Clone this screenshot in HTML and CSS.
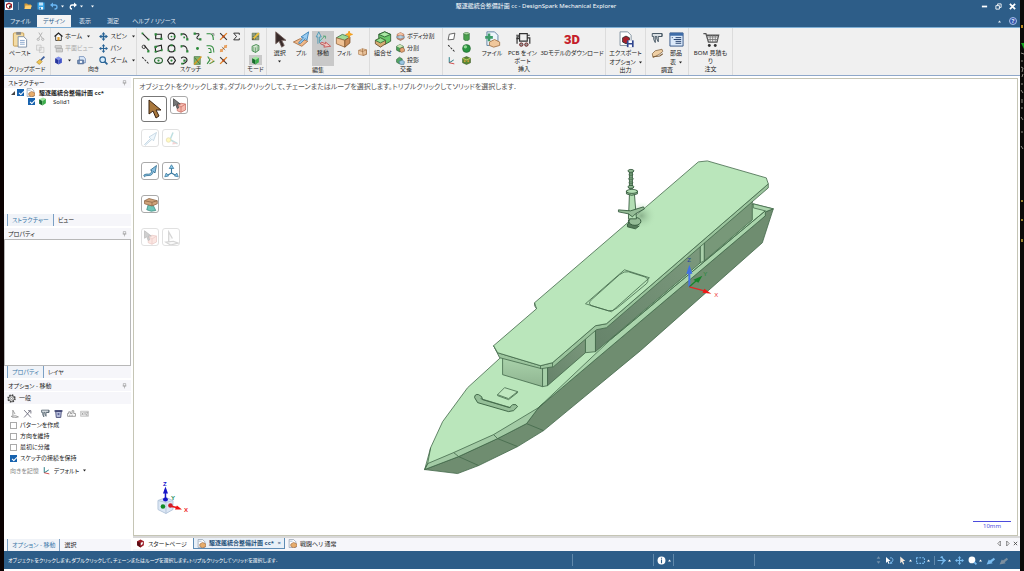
FILE: index.html
```html
<!DOCTYPE html>
<html lang="ja">
<head>
<meta charset="utf-8">
<title>駆逐艦統合整備計画 cc - DesignSpark Mechanical Explorer</title>
<link rel="stylesheet" href="styles.css">
</head>
<body>
<svg class="defs" aria-hidden="true">
  <symbol id="logo" viewBox="0 0 16 16"><rect width="16" height="16" rx="1" fill="#fff"/><path d="M8 1l6 3v7l-6 4-6-4V4z" fill="#a3202a"/><path d="M8 4l4 2v4l-4 3-4-3V6z" fill="#fff"/><path d="M8 8l4-2v4l-4 3z" fill="#333"/></symbol>
  <symbol id="cubered" viewBox="0 0 16 16"><path d="M8 1l6 3v7l-6 4-6-4V4z" fill="#9e1c26"/><path d="M8 7l4-2v4l-4 3z" fill="#fff"/><path d="M2 4l6 3v8l-6-4z" fill="#5b0d14"/></symbol>
  <symbol id="folder" viewBox="0 0 16 16"><path d="M1 3h5l2 2h6v9H1z" fill="#d49a38"/><path d="M3 7h13l-3 7H1z" fill="#ffcf70"/></symbol>
  <symbol id="save" viewBox="0 0 16 16"><path d="M1 1h14v14H1z" fill="#36a4e6"/><path d="M4 1h8v6H4z" fill="#bfe2fa"/><path d="M4 10h8v5H4z" fill="#e9f5fd"/><path d="M5 11h3v4H5z" fill="#2178b8"/></symbol>
  <symbol id="undo" viewBox="0 0 16 16"><path d="M3 6h7a4 4 0 0 1 0 8H9" fill="none" stroke="#69b5f2" stroke-width="2.6"/><path d="M6 1L0 6l6 5z" fill="#69b5f2"/></symbol>
  <symbol id="redo" viewBox="0 0 16 16"><path d="M12 6H7a4 4 0 0 0-1 8" fill="none" stroke="#fff" stroke-width="2.6"/><path d="M10 1l6 5-6 5z" fill="#fff"/></symbol>
  <symbol id="caret" viewBox="0 0 6 6"><path d="M0 1h6L3 5z" fill="currentColor"/></symbol>
  <symbol id="caretup" viewBox="0 0 6 6"><path d="M0 5h6L3 1z" fill="currentColor"/></symbol>
  <symbol id="paste" viewBox="0 0 16 18"><rect x="1" y="2" width="11" height="14" rx="1" fill="#f3dba4" stroke="#c79c4f"/><path d="M4 1h5v3H4z" fill="#888"/><path d="M6 6h6l3 3v8H6z" fill="#fff" stroke="#7c8fa8"/><path d="M8 10h5M8 12h5M8 14h5" stroke="#8aa7cc"/></symbol>
  <symbol id="cut" viewBox="0 0 16 16"><path d="M5 1l6 10M11 1L5 11" stroke="#aaa" stroke-width="1.5"/><circle cx="4" cy="13" r="2" fill="none" stroke="#aaa" stroke-width="1.5"/><circle cx="12" cy="13" r="2" fill="none" stroke="#aaa" stroke-width="1.5"/></symbol>
  <symbol id="copy" viewBox="0 0 16 16"><path d="M1 2h8v9H1zM6 6h8v9H6z" fill="#eee" stroke="#b5b5b5"/></symbol>
  <symbol id="brush" viewBox="0 0 16 16"><path d="M15 1l-7 7" stroke="#3a5d9c" stroke-width="3"/><path d="M7 6l4 4-5 5-5-4z" fill="#f0c552" stroke="#a67b1c"/></symbol>
  <symbol id="home" viewBox="0 0 16 16"><path d="M3 7v8h10V7" fill="#fff" stroke="#333" stroke-width="1.6"/><path d="M1 8l7-6 7 6" fill="none" stroke="#222" stroke-width="2.2"/><path d="M6 9h4v6H6z" fill="#e0a030"/></symbol>
  <symbol id="plan" viewBox="0 0 16 16"><path d="M2 3h11v4H2zM4 8h11v6H4z" fill="#ddd" stroke="#aaa" stroke-width="1.5"/><path d="M6 11h7" stroke="#aaa"/></symbol>
  <symbol id="cubeblue" viewBox="0 0 16 16"><path d="M2 4l6-3 6 3-6 3z" fill="#8090e8"/><path d="M2 4l6 3v8l-6-3z" fill="#26349c"/><path d="M14 4L8 7v8l6-3z" fill="#4355c8"/></symbol>
  <symbol id="snap" viewBox="0 0 16 16"><path d="M4 1h8l3 4v7H5z" fill="#dbe8f8" stroke="#4669a0"/><rect x="1" y="7" width="11" height="7" rx="1" fill="#7690b8" stroke="#39557f"/><circle cx="7" cy="10.500" r="2" fill="#fff"/></symbol>
  <symbol id="spin" viewBox="0 0 16 16"><path d="M8 2v12M2 8h12" stroke="#286396" stroke-width="2"/><path d="M8 0l3 4H5zM8 16l3-4H5zM0 8l4-3v6zM16 8l-4-3v6z" fill="#286396"/><ellipse cx="8" cy="8" rx="5" ry="3" fill="none" stroke="#286396"/></symbol>
  <symbol id="pan" viewBox="0 0 16 16"><path d="M8 2v12M2 8h12" stroke="currentColor" stroke-width="2"/><path d="M8 0l3 4H5zM8 16l3-4H5zM0 8l4-3v6zM16 8l-4-3v6z" fill="currentColor"/></symbol>
  <symbol id="zoomi" viewBox="0 0 16 16"><circle cx="6.500" cy="6.500" r="5" fill="#d8ecfb" stroke="#2a6496" stroke-width="2"/><path d="M10 10l5 5" stroke="#2a6496" stroke-width="3"/></symbol>
  <symbol id="line" viewBox="0 0 16 16"><path d="M3 3l10 10" stroke="#222" stroke-width="2"/><path d="M1 1h3v3H1zM12 12h3v3h-3z" fill="#2d8a3b"/></symbol>
  <symbol id="rect" viewBox="0 0 16 16"><path d="M3 4h10v8H3z" fill="none" stroke="#222" stroke-width="2"/><path d="M1 2h4v4H1zM11 10h4v4h-4z" fill="#2d8a3b"/></symbol>
  <symbol id="circ" viewBox="0 0 16 16"><circle cx="8" cy="8" r="6" fill="none" stroke="#222" stroke-width="1.800"/><circle cx="8" cy="8" r="1.500" fill="#2d8a3b"/><path d="M12 6h3v4h-3z" fill="#2d8a3b"/></symbol>
  <symbol id="arc" viewBox="0 0 16 16"><path d="M2 4c6-2 11 1 11 9" fill="none" stroke="#222" stroke-width="2"/><path d="M1 2h3v4H1zM11 11h4v4h-4z" fill="#2d8a3b"/></symbol>
  <symbol id="tarc" viewBox="0 0 16 16"><path d="M2 4c6-2 11 1 11 9" fill="none" stroke="#222" stroke-width="2"/><path d="M1 2h3v4H1zM11 11h4v4h-4zM6 8h3v3H6z" fill="#2d8a3b"/></symbol>
  <symbol id="spline" viewBox="0 0 16 16"><path d="M2 3h8c3 3-5 5-3 8 1 2 4 2 7 2" fill="none" stroke="#222" stroke-width="1.800"/><path d="M1 1h4v4H1zM11 11h4v4h-4z" fill="#2d8a3b"/></symbol>
  <symbol id="corner" viewBox="0 0 16 16"><path d="M1 3h6c4 0 6 2 6 11" fill="none" stroke="#2d8a3b" stroke-width="2"/><path d="M10 3h4v4" fill="none" stroke="#444"/></symbol>
  <symbol id="trim" viewBox="0 0 16 16"><path d="M2 2l12 12" stroke="#333" stroke-width="2"/><path d="M14 2L2 14" stroke="#e08024" stroke-width="2.500"/><path d="M6 6h4v4H6z" fill="#b3471c"/></symbol>
  <symbol id="sigma" viewBox="0 0 16 16"><path d="M13 5V2H3l5 6-5 6h10v-3" fill="none" stroke="#222" stroke-width="1.600"/></symbol>
  <symbol id="tangent" viewBox="0 0 16 16"><circle cx="5" cy="5" r="3" fill="none" stroke="#333" stroke-width="1.600"/><path d="M6 3l8 9" stroke="#222" stroke-width="2"/><path d="M11 11h4v4h-4z" fill="#2d8a3b"/></symbol>
  <symbol id="rect3" viewBox="0 0 16 16"><path d="M2 5l11-3 1 9-11 3z" fill="none" stroke="#222" stroke-width="2"/><path d="M1 3h4v4H1zM1 12h4v3H1zM12 9h3v4h-3z" fill="#2d8a3b"/></symbol>
  <symbol id="circ3" viewBox="0 0 16 16"><circle cx="8" cy="8" r="6" fill="none" stroke="#222" stroke-width="2"/><path d="M6 1h4v3H6zM1 10h3v3H1zM12 10h3v3h-3z" fill="#2d8a3b"/></symbol>
  <symbol id="point" viewBox="0 0 16 16"><circle cx="8" cy="8" r="2.600" fill="#2d8a3b"/></symbol>
  <symbol id="offset" viewBox="0 0 16 16"><path d="M1 3h6c5 0 7 3 7 12M4 8h2c2 0 3 2 3 7H5" fill="none" stroke="#2d8a3b" stroke-width="1.800"/></symbol>
  <symbol id="split" viewBox="0 0 16 16"><path d="M14 2L2 14" stroke="#e08024" stroke-width="2"/><path d="M9 2h5v5H9zM2 9h5v5H2z" fill="#e9a263"/><path d="M5 5l6 6" stroke="#555"/></symbol>
  <symbol id="cline" viewBox="0 0 16 16"><path d="M2 2l12 12" stroke="#333" stroke-width="1.800" stroke-dasharray="4 2"/></symbol>
  <symbol id="ell" viewBox="0 0 16 16"><ellipse cx="8" cy="8" rx="7" ry="5" fill="none" stroke="#245f2d" stroke-width="2"/><circle cx="8" cy="8" r="2" fill="#2d8a3b"/></symbol>
  <symbol id="poly" viewBox="0 0 16 16"><path d="M5 2h6l4 6-4 6H5L1 8z" fill="none" stroke="#222" stroke-width="2"/><circle cx="8" cy="8" r="2" fill="#2d8a3b"/></symbol>
  <symbol id="sweep" viewBox="0 0 16 16"><path d="M2 4c5-5 12 0 10 5-1 3-4 4-7 5" fill="none" stroke="#222" stroke-width="2"/><path d="M6 6h4v4H6zM2 12h4v3H2z" fill="#2d8a3b"/></symbol>
  <symbol id="proj" viewBox="0 0 16 16"><path d="M2 1h11v14H2z" fill="#7fb46b" stroke="#386a35"/><path d="M2 15L15 1" stroke="#d99a24" stroke-width="2.500"/><path d="M3 3l9 11" stroke="#333"/></symbol>
  <symbol id="bend" viewBox="0 0 16 16"><path d="M3 1l4 6-5 7M6 14l9-5" fill="none" stroke="#3b9148" stroke-width="2"/><path d="M6 3l7 5-5 5" fill="none" stroke="#d49a30" stroke-width="1.500"/></symbol>
  <symbol id="cubegreen" viewBox="0 0 16 16"><path d="M2 4l7-3 5 2-6 4z" fill="#a2e7a0"/><path d="M2 4l6 3v8l-6-3z" fill="#176b2b"/><path d="M14 3L8 7v8l6-4z" fill="#3caf4b"/></symbol>
  <symbol id="pattern" viewBox="0 0 16 16"><path d="M1 4l7-3 7 3v8l-7 3-7-3z" fill="#5d8a35" stroke="#38541f"/><path d="M1 4l7 3 7-3" fill="none" stroke="#b7c85a" stroke-width="2"/><circle cx="5" cy="9" r="1.500" fill="#e8a33a"/><circle cx="11" cy="9" r="1.500" fill="#e8a33a"/></symbol>
  <symbol id="section" viewBox="0 0 16 16"><path d="M2 4l7-3 5 2v8l-6 4-6-3z" fill="#dcebd9" stroke="#2e7c3a" stroke-width="1.500"/><path d="M8 6v9M5 5v8M11 4v8" stroke="#2e7c3a"/></symbol>
  <symbol id="sketchmode" viewBox="0 0 16 16"><path d="M2 2h12v12H2z" fill="#8c9a80" stroke="#57704e"/><path d="M2 8h12M8 2v12" stroke="#54714b"/><path d="M3 13L14 2" stroke="#f1c136" stroke-width="3"/><path d="M2 14l4-1-3-3z" fill="#333"/></symbol>
  <symbol id="cursor" viewBox="0 0 16 20"><path d="M3 1v14l4-3 3 7 3-2-3-6h5z" fill="#382a29" stroke="#735e5a"/></symbol>
  <symbol id="cursorgold" viewBox="0 0 16 20"><path d="M3 1v14l4-3 3 7 3-2-3-6h5z" fill="#a9783d" stroke="#3b2413"/></symbol>
  <symbol id="pull" viewBox="0 0 20 20"><path d="M1 13l8-4 9 3-7 6z" fill="#f0b889" stroke="#a56e42"/><path d="M7 14l6-6-3-1 9-6-2 10-2-2-6 6z" fill="#9bcdf2" stroke="#377eb4"/></symbol>
  <symbol id="move" viewBox="0 0 20 20"><path d="M5 1l3 6H6v7l5 3M5 1L2 7h2v8" fill="#a6d7ec" stroke="#4b94ae"/><path d="M6 12l6-6M10 6h3v3" fill="none" stroke="#49a36f"/><path d="M8 13l5 2v-2l6 5-8 1 1-2-5-2z" fill="#f0c4c0" stroke="#c45050"/></symbol>
  <symbol id="fill" viewBox="0 0 20 20"><path d="M1 8l7-4 9 3-6 4z" fill="#9edb96" stroke="#44704a"/><path d="M1 8l10 3v8L1 15z" fill="#efc295" stroke="#956a43"/><path d="M17 7l-6 4v8l6-5z" fill="#c98d5a" stroke="#83552c"/><path d="M16 0l1 3 3 1-3 1-1 3-1-3-3-1 3-1z" fill="#ffb420" stroke="#ef9615"/></symbol>
  <symbol id="cubetan" viewBox="0 0 16 16"><path d="M1 6l7-3 7 2v8l-6 2-8-2z" fill="#f1cda7" stroke="#a36c3d"/><path d="M8 8l7-3v8l-6 2zM8 3v5L1 6" fill="#e6bf98" stroke="#915c31"/></symbol>
  <symbol id="combine" viewBox="0 0 20 20"><path d="M5 4l7-3 7 3v8l-7 4-7-4z" fill="#69c86a" stroke="#285a2d"/><path d="M5 4l7 3 7-3-7-3z" fill="#a9e8a4" stroke="#285a2d"/><path d="M1 11l6-3 6 3v4l-6 4-6-4z" fill="#d7ac74" stroke="#664b2e"/><path d="M1 11l6-3 6 3-6 3z" fill="#95df8e" stroke="#316a35"/></symbol>
  <symbol id="splitbody" viewBox="0 0 16 16"><path d="M2 4l6-3 6 3v8l-6 3-6-3z" fill="#d58a68" stroke="#8a5a42"/><path d="M2 4l6-3 6 3-6 3z" fill="#f3bf9e"/><path d="M0 9l8-3 8 3-8 3z" fill="#b4cfe0" stroke="#7596ac"/></symbol>
  <symbol id="splitgreen" viewBox="0 0 16 16"><path d="M1 4l6-3 6 3v7l-6 3-6-3z" fill="#49a057" stroke="#27532d"/><path d="M1 4l6-3 6 3-6 3z" fill="#cfe6b8"/><path d="M7 8l5-2 3 3v4l-5 2-3-2z" fill="#e4a272" stroke="#775136"/></symbol>
  <symbol id="projgreen" viewBox="0 0 16 16"><path d="M1 6l5-4 5 3v6l-5 3-5-3z" fill="#54a866" stroke="#2b5a36"/><path d="M5 10l6-3 4 3-1 5H8z" fill="#9cc6e2" stroke="#44718f"/></symbol>
  <symbol id="plane" viewBox="0 0 16 16"><path d="M4 4l10-2-2 11-10 1z" fill="#fff" stroke="#333" stroke-width="1.300"/></symbol>
  <symbol id="cyl" viewBox="0 0 16 16"><path d="M3 3v10c0 3 10 3 10 0V3z" fill="#49a04d" stroke="#24632c"/><ellipse cx="8" cy="3" rx="5" ry="2" fill="#b3e0a8" stroke="#24632c"/></symbol>
  <symbol id="sphere" viewBox="0 0 16 16"><circle cx="8" cy="8" r="7" fill="#299440" stroke="#23612e"/><circle cx="6" cy="5" r="3" fill="#93d895"/></symbol>
  <symbol id="axes" viewBox="0 0 16 16"><path d="M4 2v10l8-5" fill="none" stroke="#237a82" stroke-width="1.700"/><path d="M4 12l9 2" stroke="#c33" stroke-width="1.500"/></symbol>
  <symbol id="doc" viewBox="0 0 16 16"><path d="M2 1h8l4 4v10H2z" fill="#fff" stroke="#6c7f96"/><path d="M5 9l5-3 6 3v4l-6 3-5-3z" fill="#e6ac6c" stroke="#946039"/><path d="M3 4h5" stroke="#759bbf"/></symbol>
  <symbol id="file" viewBox="0 0 20 20"><path d="M4 1h9l4 4v12H4z" fill="#eef5fb" stroke="#54799a"/><path d="M2 6h3V3h3v3h3v3H8v3H5V9H2z" fill="#3d9b69"/><path d="M7 13l6-3 6 3v4l-7 2-5-2z" fill="#f0c79b" stroke="#a27249"/></symbol>
  <symbol id="pcb" viewBox="0 0 20 20"><path d="M6 3h9v9H6zM2 5h4M2 9h4M15 5h3M6 7H3v8M15 8h3v7" fill="none" stroke="#333" stroke-width="1.400"/><circle cx="8" cy="16" r="2" fill="#999" stroke="#611"/><circle cx="14" cy="16" r="2" fill="#999" stroke="#611"/></symbol>
  <symbol id="export" viewBox="0 0 20 20"><path d="M3 1h9l4 4v12H3z" fill="#fff" stroke="#718494"/><path d="M6 8l4-2 4 2v5l-4 2-4-2z" fill="#a9202b" stroke="#333"/><path d="M11 11h8v8h-8z" fill="#31468e"/><path d="M13 11h4v3h-4zM13 16h4v3h-4z" fill="#fff"/></symbol>
  <symbol id="caliper" viewBox="0 0 16 16"><path d="M1 2h13v4H9v7L7 9V6H5v8L3 10V6H1zM10 6h4V2" fill="#d9dfe3" stroke="#465663" stroke-width="1.300"/></symbol>
  <symbol id="mass" viewBox="0 0 16 16"><path d="M1 9l4-4 9-2 1 3-5 4-8 4z" fill="#efcfa4" stroke="#80613d"/><path d="M2 13l9-1 4-3" fill="none" stroke="#80613d" stroke-width="1.500"/></symbol>
  <symbol id="bom" viewBox="0 0 16 16"><path d="M1 1h14v14H1z" fill="#dbe9fa" stroke="#315485"/><path d="M1 1h14v3H1z" fill="#3e6ca8"/><path d="M7 6h6M5 8h8M7 10h6M7 12h6M3 6h1" stroke="#203c69"/></symbol>
  <symbol id="cart" viewBox="0 0 20 20"><path d="M1 3h3l3 10h10l2-8H5" fill="none" stroke="#555" stroke-width="1.500"/><path d="M5 7h13M6 10h12M9 5v8M12 5v8M15 5v8" stroke="#777"/><circle cx="8" cy="17" r="1.700" fill="#333"/><circle cx="15" cy="17" r="1.700" fill="#333"/></symbol>
  <symbol id="selbox" viewBox="0 0 20 20"><path d="M7 9l5-2 6 1v8l-6 3-5-2z" fill="#f6b9ae" stroke="#c76d63"/><path d="M12 12l6-4M12 12v7M12 12L7 9" stroke="#c76d63"/><path d="M2 1v10l3-2 2 5 2-1-2-5h4z" fill="#777" stroke="#444"/></symbol>
  <symbol id="dirarrow" viewBox="0 0 20 20"><path d="M2 18l8-8-2-2 10-6-4 11-2-2-9 8z" fill="#d4e9f8" stroke="#3d7ca5"/></symbol>
  <symbol id="patharrow" viewBox="0 0 20 20"><path d="M1 15c5-4 8 2 11-6l-2-1 8-6-2 10-2-2c-3 9-8 3-12 7z" fill="#8bc1e3" stroke="#246487"/></symbol>
  <symbol id="anchor" viewBox="0 0 20 20"><path d="M8 12l4-10M9 12l9 5" stroke="#48a6aa" stroke-width="2"/><circle cx="6" cy="12" r="3" fill="#ffef4c" stroke="#bba326"/><path d="M12 14l6 3-7 1z" fill="#d88"/></symbol>
  <symbol id="triad" viewBox="0 0 20 20"><path d="M10 12V4M10 12l-7 4M10 12l7 4" stroke="#39799f" stroke-width="1.500"/><path d="M10 1l3 5H7zM1 17l2-5 3 4zM19 17l-5-1 3-4z" fill="#8dc8e8" stroke="#39799f"/></symbol>
  <symbol id="support" viewBox="0 0 20 20"><path d="M7 10h6l4 8-6 1-6-2z" fill="#6fc5b8" stroke="#39877d"/><path d="M2 5l6-3 11 3v4l-7 3L2 9z" fill="#d0a37a" stroke="#8a6343"/><path d="M2 5l10 2 7-2M12 7v5" fill="none" stroke="#8a6343"/></symbol>
  <symbol id="gear" viewBox="0 0 16 16"><circle cx="8" cy="8" r="6" fill="#fff" stroke="#444" stroke-width="3" stroke-dasharray="2.700 2"/><circle cx="8" cy="8" r="5" fill="none" stroke="#444" stroke-width="1.500"/><circle cx="8" cy="8" r="2" fill="#fff" stroke="#444"/></symbol>
  <symbol id="pin" viewBox="0 0 8 10"><path d="M2 1h4v4H2zM1 5h6M4 5v4" fill="none" stroke="#999"/></symbol>
  <symbol id="ruler" viewBox="0 0 16 16"><path d="M1 13h14V8h-3V3H9v5H6V5H3v3H1zM5 13v-3M9 13v-3" fill="none" stroke="#888" stroke-width="1.400"/></symbol>
  <symbol id="xyz" viewBox="0 0 16 16"><path d="M1 4h14v9H1z" fill="#eee" stroke="#aaa"/><path d="M3 6l3 5M6 6l-3 5M8 6l1 2 1-2M9 8v3M11 6h3l-3 5h3" fill="none" stroke="#888"/></symbol>
  <symbol id="upto" viewBox="0 0 16 16"><path d="M2 13l8-1 5 2-8 2zM5 12V2l4 7" fill="#eee" stroke="#888" stroke-width="1.300"/></symbol>
  <symbol id="crossarrow" viewBox="0 0 16 16"><path d="M2 15L13 3M9 3h5v5M2 2l12 13" fill="none" stroke="#667" stroke-width="1.500"/></symbol>
  <symbol id="trash" viewBox="0 0 16 16"><path d="M3 4h10l-1 11H4z" fill="#bbc2df" stroke="#3c4270" stroke-width="1.500"/><path d="M1 2h14v3H1z" fill="#3c4270"/><circle cx="8" cy="9" r="2" fill="#60669a"/></symbol>
  <symbol id="tree" viewBox="0 0 6 6"><path d="M6 0v6H0z" fill="#444"/></symbol>
  <symbol id="info" viewBox="0 0 16 16"><circle cx="8" cy="8" r="7" fill="#fff"/><path d="M7 3h2v2H7zM7 6h2v7H7z" fill="#2c5b86"/></symbol>
  <symbol id="selrot" viewBox="0 0 18 16"><path d="M2 1v12l3-3 2 5 2-1-2-5h4z" fill="#fff"/><path d="M10 3c6-2 8 5 3 9" fill="none" stroke="#7ab9ec" stroke-width="2"/><path d="M12 9l3 5-6 1z" fill="#7ab9ec"/></symbol>
  <symbol id="whitecursor" viewBox="0 0 16 16"><path d="M4 1v12l3-3 2 5 2-1-2-5h4z" fill="#f4e8dc"/></symbol>
  <symbol id="marquee" viewBox="0 0 16 16"><path d="M1 3h14v10H1z" fill="none" stroke="#79bbef" stroke-width="2" stroke-dasharray="3 2"/></symbol>
  <symbol id="orbit" viewBox="0 0 16 16"><path d="M1 8h14M8 1c5 5 5 9 0 14" fill="none" stroke="#79bbef" stroke-width="2"/><path d="M11 4l5 4-5 4zM5 2l5-2v5z" fill="#79bbef"/></symbol>
  <symbol id="whitezoom" viewBox="0 0 16 16"><circle cx="7" cy="7" r="6" fill="#fff"/><path d="M11 11l4 4" stroke="#79bbef" stroke-width="3"/></symbol>
  <symbol id="back" viewBox="0 0 16 16"><path d="M14 3l-7 5-2-2-4 9 11-2-2-2 6-5z" fill="currentColor"/></symbol>
</svg>

<div class="app">
  <header class="top">
    <div class="titlebar">
      <div class="quick">
        <svg><use href="#logo"/></svg><i class="bar"></i>
        <button aria-label="開く"><svg><use href="#folder"/></svg></button>
        <button aria-label="保存"><svg><use href="#save"/></svg></button>
        <button aria-label="元に戻す"><svg><use href="#undo"/></svg><svg class="car"><use href="#caret"/></svg></button>
        <button aria-label="やり直し"><svg><use href="#redo"/></svg><svg class="car"><use href="#caret"/></svg></button>
        <button aria-label="カスタマイズ"><svg class="car"><use href="#caret"/></svg></button>
      </div>
      <h1 class="title">駆逐艦統合整備計画 cc - DesignSpark Mechanical Explorer</h1>
      <div class="win">
        <button aria-label="最小化"><svg viewBox="0 0 8 8"><path d="M1 4h6" stroke="#fff" stroke-width="2"/></svg></button>
        <button aria-label="元のサイズ"><svg viewBox="0 0 8 8"><path d="M3 3V1h4v4H5M1 3h4v4H1z" fill="none" stroke="#fff"/></svg></button>
        <button aria-label="閉じる"><svg viewBox="0 0 8 8"><path d="M1 1l6 6M7 1L1 7" stroke="#fff" stroke-width="2"/></svg></button>
      </div>
    </div>
    <nav class="menu">
      <button>ファイル</button><button class="on">デザイン</button><button>表示</button><button>測定</button><button>ヘルプ / リソース</button>
      <div class="help"><button aria-label="折りたたむ"><svg class="car"><use href="#caretup"/></svg></button><button class="q" aria-label="ヘルプ">?</button></div>
    </nav>
  </header>

  <section class="ribbon">
    <div class="group g-clip">
      <div class="row">
        <button class="big"><svg><use href="#paste"/></svg>ペースト</button>
        <div class="col"><button aria-label="切り取り"><svg><use href="#cut"/></svg></button><button aria-label="コピー"><svg><use href="#copy"/></svg></button><button aria-label="書式"><svg><use href="#brush"/></svg></button></div>
      </div><h2>クリップボード</h2>
    </div>
    <div class="group g-view">
      <div class="row">
        <div class="col"><button><svg><use href="#home"/></svg>ホーム<svg class="car"><use href="#caret"/></svg></button><button class="dim" disabled><svg><use href="#plan"/></svg>平面ビュー</button>
          <div class="pair"><button aria-label="ビュー"><svg><use href="#cubeblue"/></svg><svg class="car"><use href="#caret"/></svg></button><button aria-label="スナップ"><svg><use href="#snap"/></svg></button></div></div>
        <div class="col blue"><button><svg><use href="#spin"/></svg>スピン<svg class="car"><use href="#caret"/></svg></button><button><svg><use href="#pan"/></svg>パン</button><button><svg><use href="#zoomi"/></svg>ズーム<svg class="car"><use href="#caret"/></svg></button></div>
      </div><h2>向き</h2>
    </div>
    <div class="group g-sketch">
      <div class="tools">
        <button aria-label="線"><svg><use href="#line"/></svg></button><button aria-label="四角形"><svg><use href="#rect"/></svg></button><button aria-label="円"><svg><use href="#circ"/></svg></button><button aria-label="接線円弧"><svg><use href="#tarc"/></svg></button><button aria-label="スプライン"><svg><use href="#spline"/></svg></button><button aria-label="コーナー"><svg><use href="#corner"/></svg></button><button aria-label="トリム"><svg><use href="#trim"/></svg></button><button aria-label="方程式"><svg><use href="#sigma"/></svg></button>
        <button aria-label="接線"><svg><use href="#tangent"/></svg></button><button aria-label="3点四角形"><svg><use href="#rect3"/></svg></button><button aria-label="3点円"><svg><use href="#circ3"/></svg></button><button aria-label="3点円弧"><svg><use href="#arc"/></svg></button><button aria-label="点"><svg><use href="#point"/></svg></button><button aria-label="オフセット"><svg><use href="#offset"/></svg></button><button aria-label="分割"><svg><use href="#split"/></svg></button><i></i>
        <button aria-label="構築線"><svg><use href="#cline"/></svg></button><button aria-label="楕円"><svg><use href="#ell"/></svg></button><button aria-label="多角形"><svg><use href="#poly"/></svg></button><button aria-label="スイープ円弧"><svg><use href="#sweep"/></svg></button><button aria-label="投影"><svg><use href="#proj"/></svg></button><button aria-label="曲げ"><svg><use href="#bend"/></svg></button><button aria-label="スケール"><svg><use href="#trim"/></svg></button>
      </div><h2>スケッチ</h2>
    </div>
    <div class="group g-mode">
      <div class="col"><button aria-label="スケッチモード"><svg><use href="#sketchmode"/></svg></button><button aria-label="断面モード"><svg><use href="#section"/></svg></button><button class="on" aria-label="3Dモード"><svg><use href="#cubegreen"/></svg></button></div><h2>モード</h2>
    </div>
    <div class="group g-edit">
      <div class="row">
        <button class="big"><svg><use href="#cursor"/></svg>選択<svg class="car"><use href="#caret"/></svg></button><button class="big"><svg><use href="#pull"/></svg>プル</button><button class="big on"><svg><use href="#move"/></svg>移動</button><button class="big"><svg><use href="#fill"/></svg>フィル</button><button class="lone" aria-label="シェル"><svg><use href="#cubetan"/></svg></button>
      </div><h2>編集</h2>
    </div>
    <div class="group g-inter">
      <div class="row"><button class="big"><svg><use href="#combine"/></svg>組合せ</button>
        <div class="col"><button><svg><use href="#splitbody"/></svg>ボディ分割</button><button><svg><use href="#splitgreen"/></svg>分割</button><button><svg><use href="#projgreen"/></svg>投影</button></div></div><h2>交差</h2>
    </div>
    <div class="group g-insert">
      <div class="row">
        <div class="shapes"><button aria-label="平面"><svg><use href="#plane"/></svg></button><button aria-label="円筒"><svg><use href="#cyl"/></svg></button><button aria-label="軸"><svg><use href="#cline"/></svg></button><button aria-label="球"><svg><use href="#sphere"/></svg></button><button aria-label="原点"><svg><use href="#axes"/></svg></button><button aria-label="パターン"><svg><use href="#pattern"/></svg></button></div>
        <button class="big"><svg><use href="#file"/></svg>ファイル</button><button class="big pcb"><svg><use href="#pcb"/></svg>PCB をイン<br>ポート</button><button class="big dl"><b>3D</b>3Dモデルのダウンロード</button>
      </div><h2>挿入</h2>
    </div>
    <div class="group g-out"><div class="row"><button class="big"><svg><use href="#export"/></svg>エクスポート<span>オプション <svg class="car"><use href="#caret"/></svg></span></button></div><h2>出力</h2></div>
    <div class="group g-inv"><div class="row"><div class="col wide"><button aria-label="測定"><svg><use href="#caliper"/></svg></button><button aria-label="質量"><svg><use href="#mass"/></svg></button></div><button class="big"><svg><use href="#bom"/></svg>部品<span>表 <svg class="car"><use href="#caret"/></svg></span></button></div><h2>調査</h2></div>
    <div class="group g-order"><div class="row"><button class="big"><svg><use href="#cart"/></svg>BOM 見積も<br>り</button></div><h2>注文</h2></div>
  </section>

  <main class="work">
    <aside class="side">
      <section class="panel">
        <h3>ストラクチャー<svg><use href="#pin"/></svg></h3>
        <div class="treeview">
          <label class="node"><svg class="tw"><use href="#tree"/></svg><input type="checkbox" checked><svg><use href="#doc"/></svg><strong>駆逐艦統合整備計画 cc*</strong></label>
          <label class="node child"><input type="checkbox" checked><svg><use href="#cubegreen"/></svg><span>Solid1</span></label>
        </div>
        <div class="tabs"><button class="on">ストラクチャー</button><button>ビュー</button></div>
      </section>
      <section class="panel">
        <h3>プロパティ<svg><use href="#pin"/></svg></h3>
        <div class="props"></div>
        <div class="tabs"><button class="on">プロパティ</button><button>レイヤ</button></div>
      </section>
      <section class="panel">
        <h3>オプション - 移動<svg><use href="#pin"/></svg></h3>
        <h4><svg><use href="#gear"/></svg>一般</h4>
        <div class="options">
          <div class="opticons"><button aria-label="指定まで"><svg><use href="#upto"/></svg></button><button aria-label="方向"><svg><use href="#crossarrow"/></svg></button><button aria-label="測定" class="sp"><svg><use href="#caliper"/></svg></button><button aria-label="削除"><svg><use href="#trash"/></svg></button><button aria-label="ルーラ"><svg><use href="#ruler"/></svg></button><button aria-label="座標"><svg><use href="#xyz"/></svg></button></div>
          <label><input type="checkbox">パターンを作成</label>
          <label><input type="checkbox">方向を維持</label>
          <label><input type="checkbox">最初に分離</label>
          <label><input type="checkbox" checked>スケッチの接続を保持</label>
          <div class="orient"><label for="ori">向きを記憶</label><svg><use href="#axes"/></svg><select id="ori"><option>デフォルト</option></select><svg class="car"><use href="#caret"/></svg></div>
        </div>
        <div class="tabs"><button class="on">オプション - 移動</button><button>選択</button></div>
      </section>
    </aside>

    <section class="stage">
      <div class="canvas">
        <svg class="scene" viewBox="133 79 884 455" preserveAspectRatio="xMinYMin meet" role="img" aria-label="船体モデル">
          <defs>
            <linearGradient id="wall" x1="0" y1="0" x2="0" y2="1"><stop offset="0" stop-color="#acd5ad"/><stop offset="1" stop-color="#8fb591"/></linearGradient>
            <linearGradient id="shade" x1="0" y1="1" x2="1" y2="0"><stop offset="0" stop-color="#66836a"/><stop offset="1" stop-color="#7c997d"/></linearGradient>
            <radialGradient id="soft"><stop offset="0" stop-color="#7fa581" stop-opacity=".8"/><stop offset="1" stop-color="#bae6bb" stop-opacity="0"/></radialGradient>
          </defs>
          <g stroke="#42684a" stroke-width=".8" stroke-linejoin="round">
            <path d="M424 470l6-22 12-26 25-34 34-31 252-153 20 5-8 7-227 192-12 16-29 15-39 18z" fill="#bae6bb"/>
            <path d="M424 470l34-13 39-18 29-15 12-16 227-192v-4l8-3-11 34-122 108-97 80-26 16-39 19-21 8z" fill="#6f8d70"/>
            <path d="M424 470l3-6 26-11 40-18 45-27-12 16-29 15-39 18z" fill="#a3cba5"/>
            <path d="M424 470l3-6 3-16" fill="none"/>
            <path d="M753 204l20 5-8 3v4L538 408l72-68 155-129-12-3z" fill="#aad4ac"/>
            <path d="M610 340l155-129M453 453l5 4 20 9M493 435l4 4 20 8M526 424l17 7" fill="none"/>
            <path d="M502 355v20l40 12v-21z" fill="url(#wall)"/><path d="M542 366v21l5-1v-21z" fill="#a6cfa8"/>
            <path d="M547 364v22l38-33v-23z" fill="url(#shade)"/>
            <path d="M585 332v21l10-1v-25z" fill="#a0c6a2"/>
            <path d="M595 327v25l105-89v-21z" fill="url(#shade)"/>
            <path d="M700 242v21l4-2v-22z" fill="#a9d0aa"/>
            <path d="M704 240v21l48-41v-22z" fill="#789879"/>
            <path d="M493 346L497 353 540 366 552 363 595 326 606 324 768 184V188L606 328 596 330 553 367 541 369 499 358z" fill="#9bc49d"/>
            <path d="M493 346L536 309 534 303 698 162 707 161 766 178 768 184 606 324 595 326 552 363 540 366 497 353z" fill="#bae6bb"/>
            <path d="M534 303v3l2 3M540 366v3M552 363v4" fill="none"/>
            <path d="M624 270l25 8-38 34-26-8zM628 272l16 5q6 2 2 7l-29 24q-5 4-9 3l-17-5q-4-2 0-6l28-25q5-4 9-3z" fill="none"/>
            <path d="M504 388l13 4-9 7-11-4z" fill="#c0e8c0"/><path d="M497 395v1l11 4 9-7v-1" fill="none"/>
            <path d="M474 398q0-4 4-3l3 2 1 3 27 8 3-3q4-1 5 2l-4 4-5 1-31-9z" fill="#95bf98" stroke="#284f31"/><path d="M480 399l30 9" fill="none"/>
          </g>
          <ellipse cx="641" cy="216" rx="15" ry="14" fill="url(#soft)"/>
          <g fill="#94bb96" stroke="#294f32" stroke-width=".8">
            <path d="M629 171h3v18h-3z"/>
            <ellipse cx="630.500" cy="171" rx="3" ry="1.500"/><ellipse cx="630.500" cy="175" rx="2" ry="1"/><ellipse cx="630.500" cy="179" rx="2.500" ry="1"/><ellipse cx="630.500" cy="183" rx="2" ry="1"/><ellipse cx="630.500" cy="187" rx="3" ry="1.500"/>
            <path d="M628 220v4l7 3 5-4v-3z" fill="#557a5a"/><path d="M627 224v3l8 2 4-3" fill="#557a5a"/>
            <ellipse cx="634.500" cy="221.500" rx="6" ry="4"/>
            <path d="M629 194h5l2 25h-8z" fill="#b3deb4"/>
            <path d="M618 210l12 1 13-4 1 2-9 5-3 3-4-3-10-2z"/>
            <path d="M626 191v3q5 3 11 0v-3z"/><ellipse cx="631.500" cy="191.500" rx="5.500" ry="2" fill="#b3deb4"/>
          </g>
          <g stroke-width="1.300"><path d="M689 287v-16" stroke="#4874e5" stroke-width="2"/><path d="M689 265l3 9h-6z" fill="#3f70e7"/><path d="M689 287l8-7" stroke="#17852b"/><path d="M702 276l-4 7-5-3z" fill="#17852b"/><path d="M689 287l15 4" stroke="#e12828"/><path d="M711 294l-9-1 2-4z" fill="#f11818"/></g>
          <g class="axis"><text x="687" y="262" fill="#24439c">Z</text><text x="703" y="276" fill="#248a35">Y</text><text x="714" y="297" fill="#e33">X</text></g>
          <g><path d="M157 501l8-3 7 3v9l-7 4-8-4z" fill="#dce7f5" stroke="#b7c8dc"/><path d="M157 501l8 2 7-2M165 503v11" fill="none" stroke="#b7c8dc"/><path d="M164.500 499v-9" stroke="#1616c7" stroke-width="1.500"/><path d="M164.500 487l2.500 7h-5z" fill="#1616c7"/><ellipse cx="164.500" cy="500" rx="2.500" ry="2" fill="#1616c7"/><circle cx="162" cy="507" r="2.300" fill="#118a25"/><circle cx="169.500" cy="506" r="2.300" fill="#d01c28"/><path d="M171 507l5 1" stroke="#e11" stroke-width="1.500"/><path d="M181 510l-7 0 2-4z" fill="#e11"/></g>
          <g class="axis bold"><text x="162" y="486" fill="#11c">Z</text><text x="170" y="500" fill="#185">Y</text><text x="183" y="513" fill="#e22">X</text></g>
        </svg>
        <p class="hint">オブジェクトをクリックします。ダブルクリックして、チェーンまたはループを選択します。トリプルクリックしてソリッドを選択します.</p>
        <div class="guides">
          <div class="first"><button class="main" aria-label="選択"><svg><use href="#cursorgold"/></svg></button><button aria-label="コンポーネント"><svg><use href="#selbox"/></svg></button></div>
          <div><button disabled aria-label="方向"><svg><use href="#dirarrow"/></svg></button><button disabled aria-label="アンカー"><svg><use href="#anchor"/></svg></button></div>
          <div><button aria-label="軌道"><svg><use href="#patharrow"/></svg></button><button aria-label="支点"><svg><use href="#triad"/></svg></button></div>
          <div><button aria-label="支持"><svg><use href="#support"/></svg></button></div>
          <div><button disabled aria-label="指定面"><svg><use href="#selbox"/></svg></button><button disabled aria-label="整列"><svg><use href="#upto"/></svg></button></div>
        </div>
        <div class="scale">10mm</div>
      </div>
      <div class="docs">
        <button class="start"><svg><use href="#cubered"/></svg>スタートページ</button>
        <button class="on"><svg><use href="#doc"/></svg><b>駆逐艦統合整備計画 cc*</b><span>×</span></button>
        <button><svg><use href="#doc"/></svg>戦闘ヘリ 通常</button>
        <div class="nav"><svg viewBox="0 0 6 6"><path d="M4 0v6L1 3z" fill="none" stroke="#555" stroke-width=".8"/></svg><svg viewBox="0 0 6 6"><path d="M2 0v6l3-3z" fill="none" stroke="#555" stroke-width=".8"/></svg><svg viewBox="0 0 6 6"><path d="M1 1l4 4M5 1L1 5" stroke="#444"/></svg></div>
      </div>
    </section>
  </main>

  <footer class="status">
    <p>オブジェクトをクリックします。ダブルクリックして、チェーンまたはループを選択します。トリプルクリックしてソリッドを選択します.</p>
    <div class="cell gap"></div>
    <div class="cell info"><button aria-label="情報"><svg><use href="#info"/></svg><svg class="car"><use href="#caretup"/></svg></button></div>
    <div class="cell gap"></div>
    <div class="cell stools">
      <svg class="updown" viewBox="0 0 8 16"><path d="M1 6l3-4 3 4zM1 10l3 4 3-4z" fill="#718fa9"/></svg>
      <button aria-label="選択を戻す"><svg><use href="#selrot"/></svg></button>
      <button aria-label="選択"><svg><use href="#whitecursor"/></svg><svg class="car"><use href="#caretup"/></svg></button>
      <button aria-label="ボックス"><svg><use href="#marquee"/></svg><svg class="car"><use href="#caretup"/></svg></button>
      <button class="sep" aria-label="スピン"><svg><use href="#orbit"/></svg><svg class="car"><use href="#caretup"/></svg></button>
      <button class="lb" aria-label="パン"><svg><use href="#pan"/></svg></button>
      <button aria-label="ズーム"><svg><use href="#whitezoom"/></svg><svg class="car"><use href="#caretup"/></svg></button>
      <button class="lb" aria-label="前のビュー"><svg><use href="#back"/></svg></button>
      <button class="gr" aria-label="次のビュー"><svg><use href="#back"/></svg></button>
    </div>
  </footer>
</div>
<svg class="edge" viewBox="0 0 4 571" preserveAspectRatio="none" aria-hidden="true"><path d="M1 25h2v3H1z" fill="#b98520"/><path d="M1 43h3v6z" fill="#13a51e"/><path d="M1 53l3 1M1 61h2M1 67l2 1-1 4M2 77l1-3M1 84h2M1 90l2 3M2 99v4M1 108h2M1 117l2 3M1 132h2M1 146l2 3" stroke="#918c84" fill="none"/><path d="M1 200h2v2H1zM1 219h2v2H1zM1 239h2v3H1z" fill="#9a812e"/></svg>
</body>
</html>
```

FILE: styles.css
```css
* { box-sizing: border-box; }
html, body { height: 100%; }
body {
  margin: 0;
  padding: 0 0 0 4px;
  display: flex;
  background: #0b0202;
  color: #222;
  font-family: "Noto Sans", "Noto Sans CJK JP", sans-serif;
  font-size: 6px;
  line-height: 8px;
  font-feature-settings: "palt";
}
.defs { position: absolute; width: 0; height: 0; }
.edge { flex: none; width: 4px; height: 100%; background: #0b0a08; }
h1, h2, h3, h4, p { margin: 0; font-size: inherit; font-weight: 400; }
button, select {
  font: inherit;
  font-feature-settings: inherit;
  color: inherit;
  background: none;
  border: 0;
  padding: 0;
  margin: 0;
  display: flex;
  align-items: center;
  white-space: nowrap;
}
svg { flex: none; width: 9px; height: 9px; display: block; }
svg.car { width: 3px; height: 3px; }

input[type="checkbox"] {
  appearance: none;
  flex: none;
  width: 7px;
  height: 7px;
  margin: 0;
  border: 1px solid #aaa;
  background: #fff;
}
input[type="checkbox"]:checked {
  border-color: #1762ae;
  background: #1762ae;
  position: relative;
}
input[type="checkbox"]:checked::after {
  content: "";
  position: absolute;
  left: 2px;
  top: 0;
  width: 2px;
  height: 4px;
  border: solid #fff;
  border-width: 0 1px 1px 0;
  transform: rotate(45deg);
}

.app { flex: 1; min-width: 0; display: flex; flex-direction: column; background: #fff; padding-bottom: 2px; }

/* Title bar and menu */
.top { background: #2d5d88; color: #fff; border-bottom: 1px solid #7fb0d6; }
.titlebar { display: grid; grid-template-columns: 1fr auto 1fr; align-items: center; height: 12px; padding-right: 4px; }
.title { padding-left: 52px; }
.quick { display: flex; align-items: center; gap: 5px; padding-left: 1px; }
.quick svg { width: 8px; height: 8px; }
.quick svg.car { width: 3px; height: 3px; margin-left: 3px; }
.bar { width: 1px; height: 8px; background: #6d93b4; }
.win { display: flex; justify-content: flex-end; gap: 7px; }
.win svg { width: 7px; height: 7px; }
.menu { display: flex; align-items: stretch; height: 15px; padding-top: 3px; color: #e2ecf5; }
.menu > button { justify-content: center; width: 28px; }
.menu > button:first-child { width: 33px; }
.menu > button.on { width: 34px; background: #f4f4f5; color: #2d5d88; }
.menu > button:nth-child(5) { width: 54px; }
.help { margin-left: auto; display: flex; align-items: center; gap: 8px; padding-right: 3px; }
.q { width: 8px; height: 8px; justify-content: center; border: 1px solid #a8c0e8; border-radius: 50%; background: #3557ae; font-weight: 700; }

/* Ribbon */
.ribbon { display: flex; height: 48px; background: #f0f0f0; border-bottom: 1px solid #8fa8c9; }
.group { flex: none; display: flex; flex-direction: column; justify-content: space-between; border-right: 1px solid #dcdcdc; padding: 3px 2px 2px; }
.group h2 { text-align: center; white-space: nowrap; }
.row { display: flex; }
.col { display: flex; flex-direction: column; gap: 2px; }
.col button { gap: 2px; height: 10px; }
.col .car { margin-left: 3px; }
.big { flex-direction: column; text-align: center; gap: 1px; }
.big > svg { width: 18px; height: 17px; }
.big > svg.car { width: 3px; height: 3px; margin-top: 2px; }
.big span { display: flex; align-items: center; gap: 3px; }
.dim { color: #aaa; }
.on { background: #c9c9c9; }
.g-clip { width: 47px; }
.g-clip .row { justify-content: space-between; padding: 0 3px; }
.g-view { width: 86px; }
.g-view .row { gap: 6px; padding-left: 1px; }
.blue svg { color: #286396; }
.blue svg.car { color: #222; }
.pair { display: flex; gap: 6px; }
.g-sketch { width: 108px; }
.tools { display: grid; grid-template-columns: repeat(8, 13px); row-gap: 2px; }
.tools button { height: 10px; justify-content: center; }
.g-mode { width: 22px; padding-left: 0; padding-right: 0; }
.g-mode .col { align-items: center; }
.g-mode button { width: 13px; justify-content: center; }
.g-edit { width: 103px; }
.g-edit .big { width: 22px; height: 35px; }
.lone { width: 12px; padding-top: 6px; justify-content: flex-end; }
.g-inter { width: 73px; }
.g-inter .row { gap: 4px; padding-left: 2px; }
.g-insert { width: 163px; }
.g-insert .row { gap: 5px; }
.shapes { display: grid; grid-template-columns: 15px 15px; row-gap: 2px; }
.shapes button { height: 10px; padding-left: 2px; }
.g-insert .big { width: 27px; }
.g-insert .dl { width: 62px; }
.dl b { height: 17px; font: 900 13px/17px Roboto, sans-serif; color: #c51e2b; }
.g-out { width: 40px; }
.g-out .big, .g-order .big { flex: 1; }
.g-inv { width: 43px; }
.g-inv .row { justify-content: space-around; }
.g-inv .wide svg { width: 13px; height: 12px; }
.g-inv .wide button { height: 13px; }
.g-inv .big > svg { width: 15px; }
.g-order { width: 44px; }

/* Side panels */
.work { flex: 1; min-height: 0; display: flex; padding-top: 1px; }
.side { flex: none; width: 127px; display: grid; grid-template-rows: 149fr 150fr 171fr; row-gap: 2px; }
.panel { display: flex; flex-direction: column; min-height: 0; }
.panel h3 { display: flex; justify-content: space-between; align-items: center; height: 11px; padding: 0 4px; background: #f6f6fa; }
.panel h3 svg { width: 5px; height: 6px; }
.panel h4 { display: flex; align-items: center; gap: 3px; height: 12px; margin-top: 1px; padding-left: 3px; background: #f6f6fa; }
.treeview { flex: 1; }
.node { display: flex; align-items: center; gap: 2px; height: 9px; padding-left: 7px; }
.node .tw { width: 4px; height: 4px; }
.node strong { padding-left: 2px; }
.node.child { padding-left: 24px; gap: 3px; }
.node.child span { padding-left: 3px; }
.tabs { display: flex; height: 12px; padding-left: 3px; background: #f6f6fa; }
.tabs button { padding: 0 4px; }
.tabs .on { background: #f0f3f8; color: #3b78a9; border: solid #7ba0c4; border-width: 0 1px; }
.props { flex: 1; border: 1px solid #b8b8b8; }
.options { flex: 1; padding: 5px 6px; display: flex; flex-direction: column; gap: 3px; }
.options label { display: flex; align-items: center; gap: 3px; }
.opticons { display: flex; gap: 4px; height: 9px; }
.opticons .sp { margin-left: 5px; }
.orient { display: flex; align-items: center; gap: 3px; padding-top: 1px; }
.orient label { color: #888; }
.orient select { appearance: none; }

/* Canvas */
.stage { flex: 1; min-width: 0; display: flex; flex-direction: column; padding-left: 2px; }
.canvas { position: relative; flex: 1; min-height: 0; margin: 1px 2px 0 0; border: 1px solid #c5c5b5; display: flex; flex-direction: column; padding: 3px 5px; }
.scene { position: absolute; inset: 0; width: 100%; height: 100%; }
.axis { font: 6px "Liberation Sans", sans-serif; }
.axis.bold { font-weight: 700; }
.hint { position: relative; font-size: 7px; line-height: 10px; color: #555; }
.guides { position: relative; display: flex; flex-direction: column; gap: 15px; padding: 4px 2px; }
.guides > div { display: flex; align-items: flex-start; gap: 3px; }
.guides .first { height: 18px; }
.guides button { width: 18px; height: 18px; justify-content: center; border: 1px solid #aaa; border-radius: 3px; background: #fff; }
.guides .main { width: 26px; height: 26px; border-color: #777; }
.guides svg { width: 15px; height: 15px; }
.guides .main svg { width: 18px; height: 20px; }
.guides button:disabled { opacity: .35; }
.scale { position: relative; width: 38px; margin: auto 1px 2px auto; border-top: 1px solid #4b4bdc; color: #4b4bdc; text-align: center; }

/* Document tabs */
.docs { flex: none; display: flex; height: 15px; padding-bottom: 2px; border-top: 2px solid #d8d8d8; background: #f6f6fa; }
.docs button { gap: 3px; padding: 0 3px; }
.docs .start { width: 60px; background: #fff; }
.docs .on { width: 92px; background: #e9f0f8; border: 1px solid #5e8cb5; border-top: 0; color: #234f77; }
.docs .on span { margin-left: auto; }
.nav { margin-left: auto; display: flex; align-items: center; gap: 3px; padding-right: 2px; }
.nav svg { width: 5px; height: 5px; }

/* Status bar */
.status { flex: none; display: flex; align-items: center; height: 18px; padding: 0 12px 0 4px; background: #2d5d88; color: #fff; }
.status p { width: 564px; font-size: 5px; }
.status svg.car { margin-left: 2px; }
.cell { display: flex; align-items: center; height: 12px; border-left: 1px solid #6189ab; }
.info { width: 20px; padding-left: 3px; }
.gap { width: 81px; }
.stools { flex: 1; justify-content: flex-end; gap: 4px; }
.stools .updown { width: 5px; height: 10px; }
.sep { border-left: 1px solid #6189ab; padding-left: 2px; }
.lb { color: #79bbef; }
.gr { color: #7c8f9f; }
```
